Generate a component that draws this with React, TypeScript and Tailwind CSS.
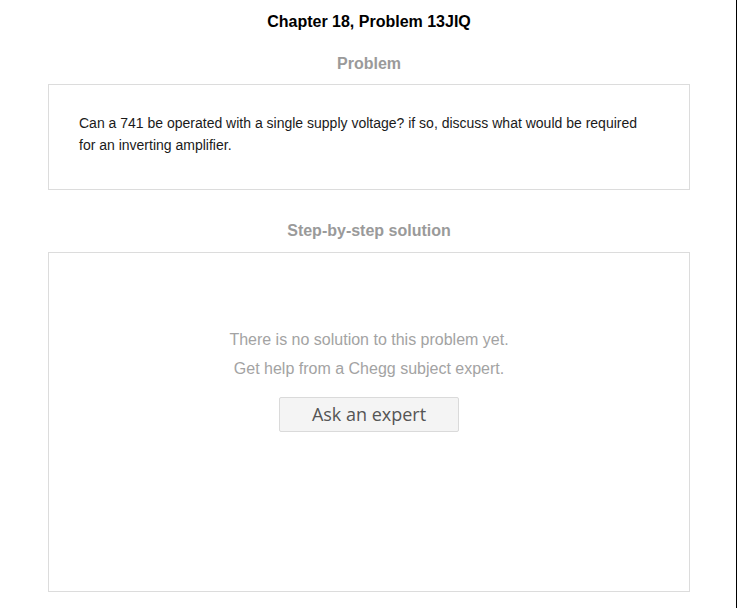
export default function App() {
  return (
    <div className="min-h-[608px] w-[738px] bg-white">
      <div className="min-h-[608px] w-[737px] border-r border-black pl-[48px] pr-[46px] font-['Liberation_Sans',Arial,sans-serif]">
        <h1 className="pt-[12px] text-center text-[16px] font-bold leading-[20px] text-black">
          Chapter 18, Problem 13JIQ
        </h1>
        <h2 className="mt-[22px] text-center text-[16px] font-bold leading-[20px] text-[#9a9a9a]">Problem</h2>
        <section className="mt-[10px] h-[106px] border border-[#dcdcdc] pl-[30px] pr-[40px] pt-[27px]">
          <p className="text-[14px] leading-[22px] text-[#1a1a1a]">
            Can a 741 be operated with a single supply voltage? if so, discuss what would be required for an inverting
            amplifier.
          </p>
        </section>
        <h2 className="mt-[31px] text-center text-[16px] font-bold leading-[20px] text-[#9a9a9a]">
          Step-by-step solution
        </h2>
        <section className="mt-[11px] flex h-[340px] flex-col items-center border border-[#dcdcdc] pt-[72px]">
          <p className="text-center text-[16px] leading-[29px] text-[#a3a3a3]">
            There is no solution to this problem yet.
            <br />
            Get help from a Chegg subject expert.
          </p>
          <button className="mt-[14px] h-[35px] w-[180px] rounded-[2px] border border-[#dadada] bg-[#f4f4f4] font-['Open_Sans',sans-serif] text-[18px] leading-[33px] text-[#555]">
            Ask an expert
          </button>
        </section>
      </div>
    </div>
  );
}
